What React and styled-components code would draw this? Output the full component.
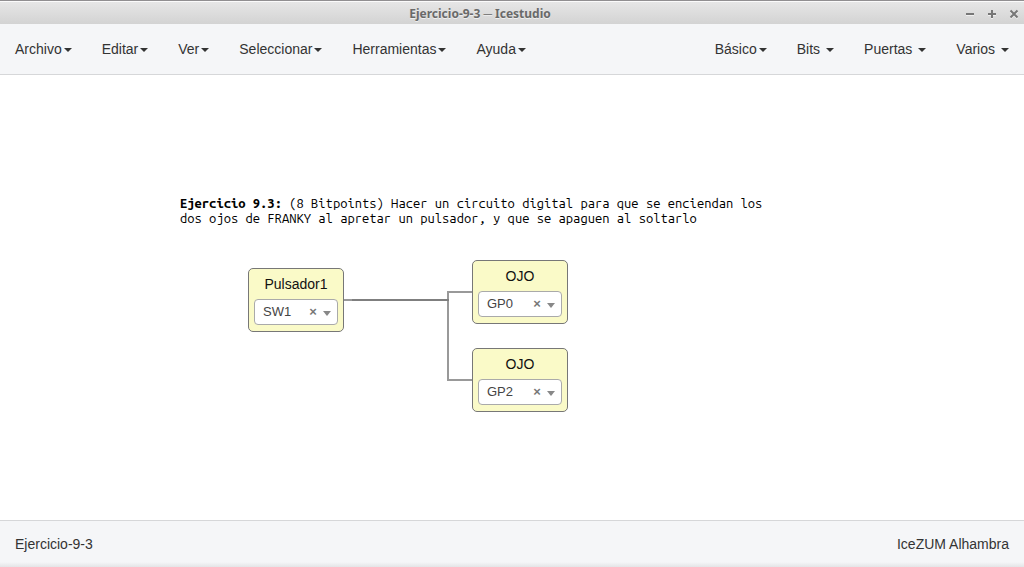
import React from "react";
import styled, { createGlobalStyle } from "styled-components";

const GlobalStyle = createGlobalStyle`
  * { box-sizing: border-box; }
  body {
    margin: 0;
    background: #fff;
    color: #333;
    font: 14px/20px "Liberation Sans", Arial, sans-serif;
  }
  button, select { font: inherit; color: inherit; }
`;

const Page = styled.div`
  display: flex;
  flex-direction: column;
  min-height: 100vh;
`;

const TitleBar = styled.header`
  display: flex;
  align-items: center;
  height: 24px;
  border-top: 1px solid #918f91;
  box-shadow: inset 0 1px #fbfbfb;
  background: linear-gradient(#e7e7e7, #d3d3d3);
`;

const WindowTitle = styled.h1`
  flex: 1;
  margin: 0;
  padding-top: 2px;
  text-align: center;
  font: bold 12px/20px "Noto Sans", "Open Sans", sans-serif;
  color: #696969;
  text-shadow: 0 1px #efefef;
`;

const WindowControls = styled.div`
  display: flex;
  width: 64px;
  gap: 8px;
  padding: 2px 3px 0 3px;
`;

const WindowButton = styled.button`
  display: flex;
  align-items: center;
  justify-content: center;
  width: 14px;
  height: 20px;
  padding: 0;
  border: 0;
  background: none;
  color: #777;

  svg { filter: drop-shadow(0 1px #f0f0f0); }
`;

const NavBar = styled.nav`
  display: flex;
  justify-content: space-between;
  background: #f5f6f8;
  border-bottom: 1px solid #d6d7d9;
`;

const MenuGroup = styled.div`
  display: flex;
`;

const MenuButton = styled.button`
  display: flex;
  align-items: center;
  gap: ${(p) => (p.$wide ? "6px" : "2px")};
  height: 50px;
  padding: 0 15px;
  border: 0;
  background: none;
  line-height: 20px;

  &::after {
    content: "";
    margin-top: 2px;
    border-top: 4px solid;
    border-right: 4px solid transparent;
    border-left: 4px solid transparent;
  }
`;

const Canvas = styled.main`
  position: relative;
  flex: 1;
  min-height: 360px;
  overflow: hidden;
`;

const Note = styled.p`
  position: absolute;
  left: 180px;
  top: 121px;
  width: 604px;
  margin: 0;
  font: 13px/15px "Ubuntu Mono", "Noto Sans Mono CJK SC", "DejaVu Sans Mono", monospace;
  color: #000;
`;

const Wires = styled.svg`
  position: absolute;
  left: 344px;
  top: 185px;
`;

const Block = styled.section`
  position: absolute;
  left: ${(p) => p.$x}px;
  top: ${(p) => p.$y}px;
  width: 96px;
  height: 64px;
  padding: 5px;
  border: 1px solid #777;
  border-radius: 5px;
  background: #fafac8;
`;

const BlockLabel = styled.label`
  display: block;
  height: 25px;
  line-height: 20px;
  text-align: center;
  color: #111;
`;

const PinField = styled.div`
  position: relative;
  height: 26px;
`;

const PinSelect = styled.select`
  appearance: none;
  width: 100%;
  height: 100%;
  padding: 0 32px 0 8px;
  border: 1px solid #aaa;
  border-radius: 4px;
  background: #fff;
  color: #444;
  font-size: 13px;
`;

const ClearButton = styled.button`
  position: absolute;
  right: 20px;
  top: 3px;
  width: 10px;
  height: 20px;
  padding: 0;
  border: 0;
  background: none;
  font-size: 13px;
  font-weight: bold;
  line-height: 20px;
  color: #777;
`;

const PinArrow = styled.span`
  position: absolute;
  right: 7px;
  top: 12px;
  border-top: 5px solid #888;
  border-right: 4px solid transparent;
  border-left: 4px solid transparent;
  pointer-events: none;
`;

const StatusBar = styled.footer`
  display: flex;
  justify-content: space-between;
  height: 47px;
  padding: 13px 15px;
  border-top: 1px solid #d6d7d9;
  background: linear-gradient(to top, #e4e5e7, #f5f6f8 5px);
`;

const leftMenus = ["Archivo", "Editar", "Ver", "Seleccionar", "Herramientas", "Ayuda"];
const rightMenus = [
  { name: "Básico" },
  { name: "Bits", wide: true },
  { name: "Puertas", wide: true },
  { name: "Varios", wide: true },
];
const blocks = [
  { id: "sw", x: 248, y: 193, name: "Pulsador1", pin: "SW1" },
  { id: "eye-a", x: 472, y: 185, name: "OJO", pin: "GP0" },
  { id: "eye-b", x: 472, y: 273, name: "OJO", pin: "GP2" },
];
const pins = ["SW1", "SW2", "GP0", "GP1", "GP2", "GP3"];

const controls = [
  { name: "Minimizar", d: "M1 5h8" },
  { name: "Maximizar", d: "M1 5h8M5 1v8" },
  { name: "Cerrar", d: "M1.5 1.5l7 7M8.5 1.5l-7 7" },
];

function PinBlock({ id, x, y, name, pin }) {
  return (
    <Block $x={x} $y={y}>
      <BlockLabel htmlFor={id}>{name}</BlockLabel>
      <PinField>
        <PinSelect id={id} defaultValue={pin}>
          {pins.map((p) => (
            <option key={p}>{p}</option>
          ))}
        </PinSelect>
        <ClearButton type="button" aria-label="Quitar">×</ClearButton>
        <PinArrow />
      </PinField>
    </Block>
  );
}

export default function App() {
  return (
    <>
      <GlobalStyle />
      <Page>
        <TitleBar>
          <WindowTitle>Ejercicio-9-3 ─ Icestudio</WindowTitle>
          <WindowControls>
            {controls.map((c) => (
              <WindowButton key={c.name} type="button" aria-label={c.name}>
                <svg width="10" height="10" fill="none" stroke="currentColor" strokeWidth="2">
                  <path d={c.d} />
                </svg>
              </WindowButton>
            ))}
          </WindowControls>
        </TitleBar>
        <NavBar>
          <MenuGroup>
            {leftMenus.map((name) => (
              <MenuButton key={name} type="button">{name}</MenuButton>
            ))}
          </MenuGroup>
          <MenuGroup>
            {rightMenus.map((m) => (
              <MenuButton key={m.name} type="button" $wide={m.wide}>{m.name}</MenuButton>
            ))}
          </MenuGroup>
        </NavBar>
        <Canvas>
          <Note>
            <b>Ejercicio 9.3:</b> (8 Bitpoints) Hacer un circuito digital para que se enciendan los
            <br />
            dos ojos de FRANKY al apretar un pulsador, y que se apaguen al soltarlo
          </Note>
          <Wires width="128" height="140" fill="none" stroke="#777" strokeWidth="2" strokeOpacity="0.75">
            <path d="M0 40H104V32H128" />
            <path d="M8 40H104V120H128" />
          </Wires>
          {blocks.map((b) => (
            <PinBlock key={b.id} {...b} />
          ))}
        </Canvas>
        <StatusBar>
          <span>Ejercicio-9-3</span>
          <span>IceZUM Alhambra</span>
        </StatusBar>
      </Page>
    </>
  );
}
